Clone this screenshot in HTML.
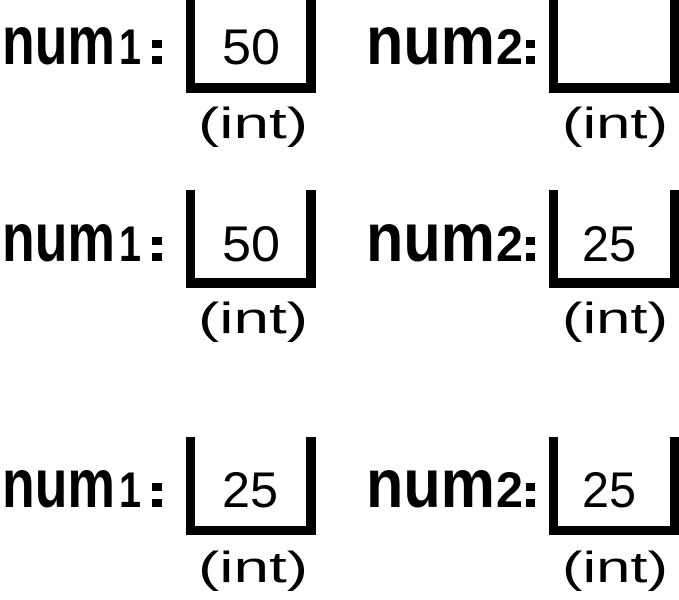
<!DOCTYPE html>
<html><head><meta charset="utf-8"><style>
html,body{margin:0;padding:0;background:#fff;width:679px;height:600px;overflow:hidden}
svg{display:block}
text{font-family:"Liberation Sans",sans-serif;fill:#000}
.b{font-weight:bold}
</style></head><body>
<svg width="679" height="600" viewBox="0 0 679 600" xmlns="http://www.w3.org/2000/svg">
<defs>
<g id="l1">
<g transform="translate(0,64) scale(1,1.2)"><text class="b" x="2" y="0" font-size="57" textLength="113" lengthAdjust="spacingAndGlyphs">num</text></g>
<text class="b" x="119" y="64" font-size="50" textLength="22" lengthAdjust="spacingAndGlyphs">1</text>
<rect x="152" y="40" width="10" height="8"/><rect x="152" y="56" width="10" height="8"/>
</g>
<g id="l2">
<g transform="translate(0,64) scale(1,1.2)"><text class="b" x="366" y="0" font-size="57" textLength="129" lengthAdjust="spacingAndGlyphs">num</text></g>
<text class="b" x="496" y="64" font-size="50" textLength="27" lengthAdjust="spacingAndGlyphs">2</text>
<rect x="526" y="40" width="9" height="8"/><rect x="526" y="56" width="9" height="8"/>
</g>
</defs>
<use href="#l1"/>
<path d="M186 0 V93 H316 V0 H306 V83 H195 V0 Z"/>
<text x="222" y="64" font-size="50" textLength="58" lengthAdjust="spacingAndGlyphs">50</text>
<text x="198" y="138" font-size="44" textLength="110" lengthAdjust="spacingAndGlyphs">(int)</text>
<use href="#l2"/>
<path d="M549 0 V93 H679 V0 H670 V83 H558 V0 Z"/>
<text x="562" y="138" font-size="44" textLength="106" lengthAdjust="spacingAndGlyphs">(int)</text>

<use href="#l1" y="197"/>
<path d="M186 190 V288 H316 V190 H306 V278 H195 V190 Z"/>
<text x="222" y="261" font-size="50" textLength="58" lengthAdjust="spacingAndGlyphs">50</text>
<text x="198" y="333" font-size="44" textLength="110" lengthAdjust="spacingAndGlyphs">(int)</text>
<use href="#l2" y="197"/>
<path d="M549 190 V288 H679 V190 H670 V278 H558 V190 Z"/>
<text x="582" y="261" font-size="50" textLength="54" lengthAdjust="spacingAndGlyphs">25</text>
<text x="562" y="333" font-size="44" textLength="106" lengthAdjust="spacingAndGlyphs">(int)</text>

<use href="#l1" y="443"/>
<path d="M186 437 V535 H316 V437 H306 V526 H195 V437 Z"/>
<text x="222" y="507" font-size="50" textLength="56" lengthAdjust="spacingAndGlyphs">25</text>
<text x="198" y="582" font-size="44" textLength="110" lengthAdjust="spacingAndGlyphs">(int)</text>
<use href="#l2" y="443"/>
<path d="M549 437 V535 H679 V437 H670 V526 H558 V437 Z"/>
<text x="582" y="507" font-size="50" textLength="54" lengthAdjust="spacingAndGlyphs">25</text>
<text x="562" y="582" font-size="44" textLength="106" lengthAdjust="spacingAndGlyphs">(int)</text>
</svg>
</body></html>
